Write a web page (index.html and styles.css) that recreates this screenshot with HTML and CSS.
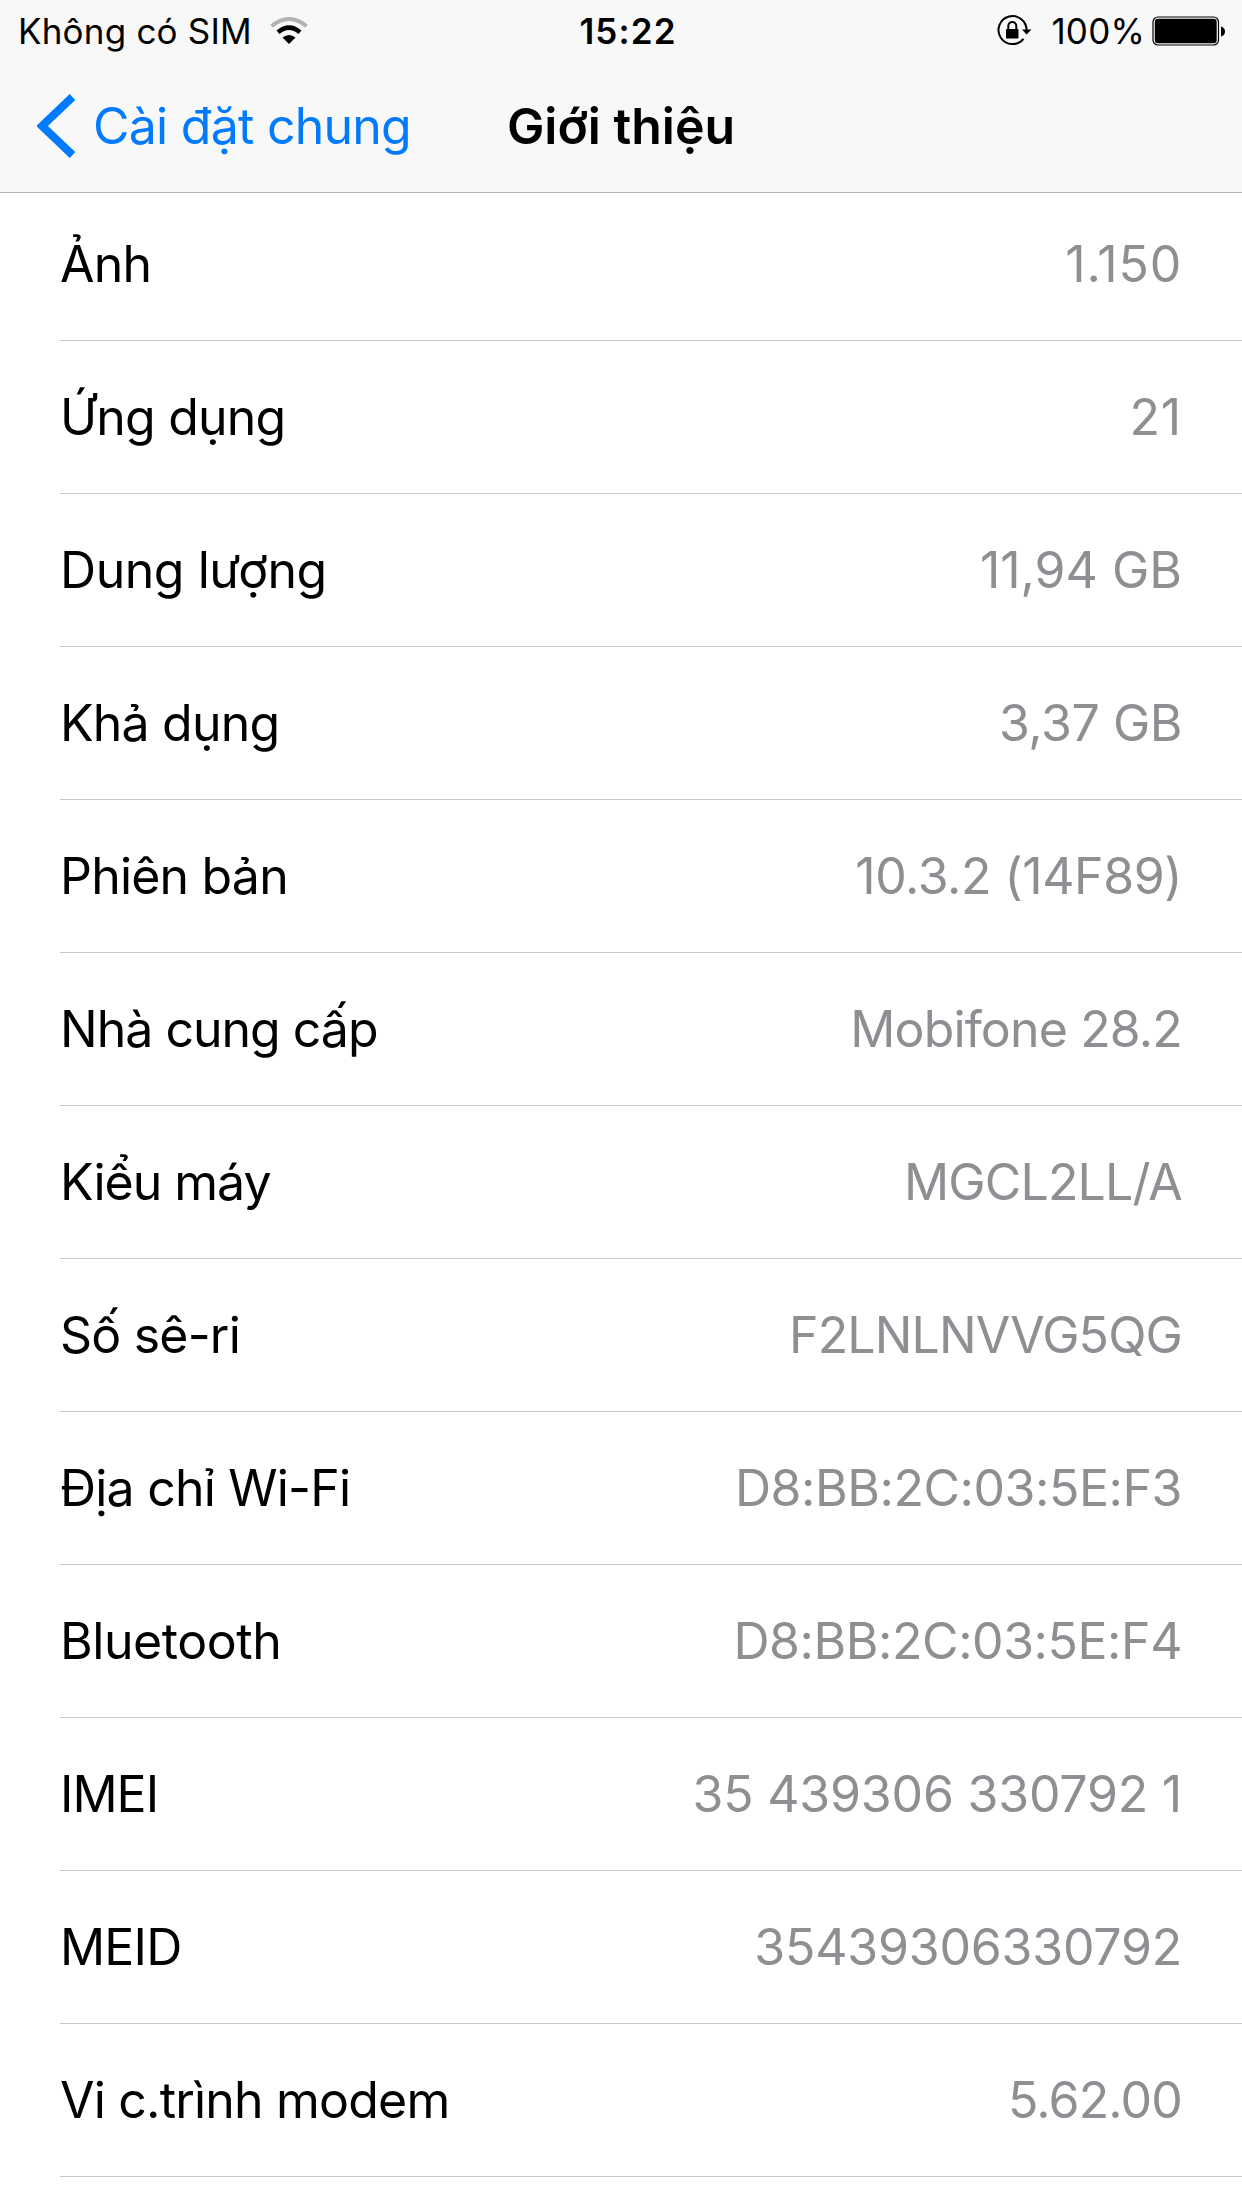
FILE: index.html
```html
<!DOCTYPE html>
<html lang="vi">
<head>
<meta charset="utf-8">
<title>Giới thiệu</title>
<link rel="stylesheet" href="styles.css">
</head>
<body>
<header class="header">
  <div class="status">
    <div class="status-left"><span class="carrier">Không có SIM</span>
      <svg class="wifi" width="38" height="28" viewBox="0 0 38 28"><path d="M1.500 9.200Q19-5.200 36.500 9.200" fill="none" stroke="#b3b3b3" stroke-width="4"/><path d="M8 15.200Q19 6 30 15.200" fill="none" stroke="#000" stroke-width="4.600"/><path d="M12.500 20.500Q19 15.500 25.500 20.500L19 27Z"/></svg>
    </div>
    <time class="clock">15:22</time>
    <div class="status-right">
      <svg class="lock" width="36" height="32" viewBox="0 0 36 32"><path d="M26.500 23.800A14 14 0 1 1 29.500 16" fill="none" stroke="#000" stroke-width="2"/><path d="M25 14.500h9.500l-5 5z"/><rect x="9" y="14" width="12.500" height="9.500" rx="0.800"/><path d="M11.300 15v-4a4 4 0 0 1 8 0v4" fill="none" stroke="#000" stroke-width="2"/></svg>
      <span class="percent">100%</span>
      <svg class="battery" width="74" height="30" viewBox="0 0 74 30"><rect x="1" y="1" width="65.500" height="28" rx="5" fill="none" stroke="#000" stroke-width="1.200"/><rect x="2.800" y="2.800" width="61.900" height="24.400" rx="3.200"/><path d="M69 10.500q4 1 4 5t-4 5z"/></svg>
    </div>
  </div>
  <nav class="nav">
    <a class="back"><svg class="chevron" width="39" height="64" viewBox="0 0 39 64"><path d="M35.500 3L5 32L35.500 61" fill="none" stroke="#007aff" stroke-width="8"/></svg><span class="back-text">Cài đặt chung</span></a>
    <h1 class="title">Giới thiệu</h1>
  </nav>
</header>
<main class="list">
  <div class="row"><span class="label">Ảnh</span><span class="value loose">1.150</span></div>
  <div class="row"><span class="label">Ứng dụng</span><span class="value loose">21</span></div>
  <div class="row"><span class="label wide">Dung lượng</span><span class="value plain">11,94 GB</span></div>
  <div class="row"><span class="label">Khả dụng</span><span class="value">3,37 GB</span></div>
  <div class="row"><span class="label">Phiên bản</span><span class="value">10.3.2 (14F89)</span></div>
  <div class="row"><span class="label narrow">Nhà cung cấp</span><span class="value tight">Mobifone 28.2</span></div>
  <div class="row"><span class="label narrow">Kiểu máy</span><span class="value tight">MGCL2LL/A</span></div>
  <div class="row"><span class="label">Số sê-ri</span><span class="value tight">F2LNLNVVG5QG</span></div>
  <div class="row"><span class="label">Địa chỉ Wi-Fi</span><span class="value">D8:BB:2C:03:5E:F3</span></div>
  <div class="row"><span class="label wide">Bluetooth</span><span class="value">D8:BB:2C:03:5E:F4</span></div>
  <div class="row"><span class="label narrow">IMEI</span><span class="value digits">35 439306 330792 1</span></div>
  <div class="row"><span class="label">MEID</span><span class="value digits">35439306330792</span></div>
  <div class="row"><span class="label">Vi c.trình modem</span><span class="value tight">5.62.00</span></div>
</main>
</body>
</html>
```
FILE: styles.css
```css
* { box-sizing: border-box; }
body { margin: 0; background: #fff; color: #000; font-family: Inter, sans-serif; height: 2208px; overflow: hidden; }
svg { display: block; flex: none; }
.header { height: 193px; background: #f8f8f9; border-bottom: 1px solid #b2b2b2; }
.status { height: 61px; padding: 0 16px 0 18px; display: grid; grid-template-columns: 1fr auto 1fr; align-items: center; font-size: 35px; white-space: nowrap; }
.status-left, .status-right { display: flex; align-items: center; }
.status-left { gap: 18px; }
.status-right { justify-content: flex-end; }
.carrier { letter-spacing: 0.2px; }
.lock { margin-right: 18px; }
.percent { margin-right: 7px; letter-spacing: 0.2px; }
.clock { font-weight: 600; letter-spacing: 1.1px; padding-left: 12px; }
.nav { height: 130px; display: grid; grid-template-columns: 1fr auto 1fr; align-items: center; padding: 0 37px; }
.back { display: flex; align-items: center; gap: 17px; color: #007aff; font-size: 50px; letter-spacing: -0.75px; white-space: nowrap; }
.title { margin: 0; font-size: 50px; font-weight: 600; line-height: 60px; white-space: nowrap; }
.list { padding-left: 60px; }
.row { height: 153px; padding-right: 60px; border-bottom: 1px solid #c8c7cc; display: flex; align-items: center; justify-content: space-between; font-size: 50px; white-space: nowrap; }
.row:first-child { height: 148px; padding-bottom: 5px; }
.label { letter-spacing: -0.8px; }
.wide { letter-spacing: -0.45px; }
.narrow { letter-spacing: -1px; }
.value { color: #8e8e93; letter-spacing: -0.45px; }
.loose { letter-spacing: 0.8px; }
.plain { letter-spacing: 0; }
.tight { letter-spacing: -0.85px; }
.digits { letter-spacing: -0.2px; }
```
